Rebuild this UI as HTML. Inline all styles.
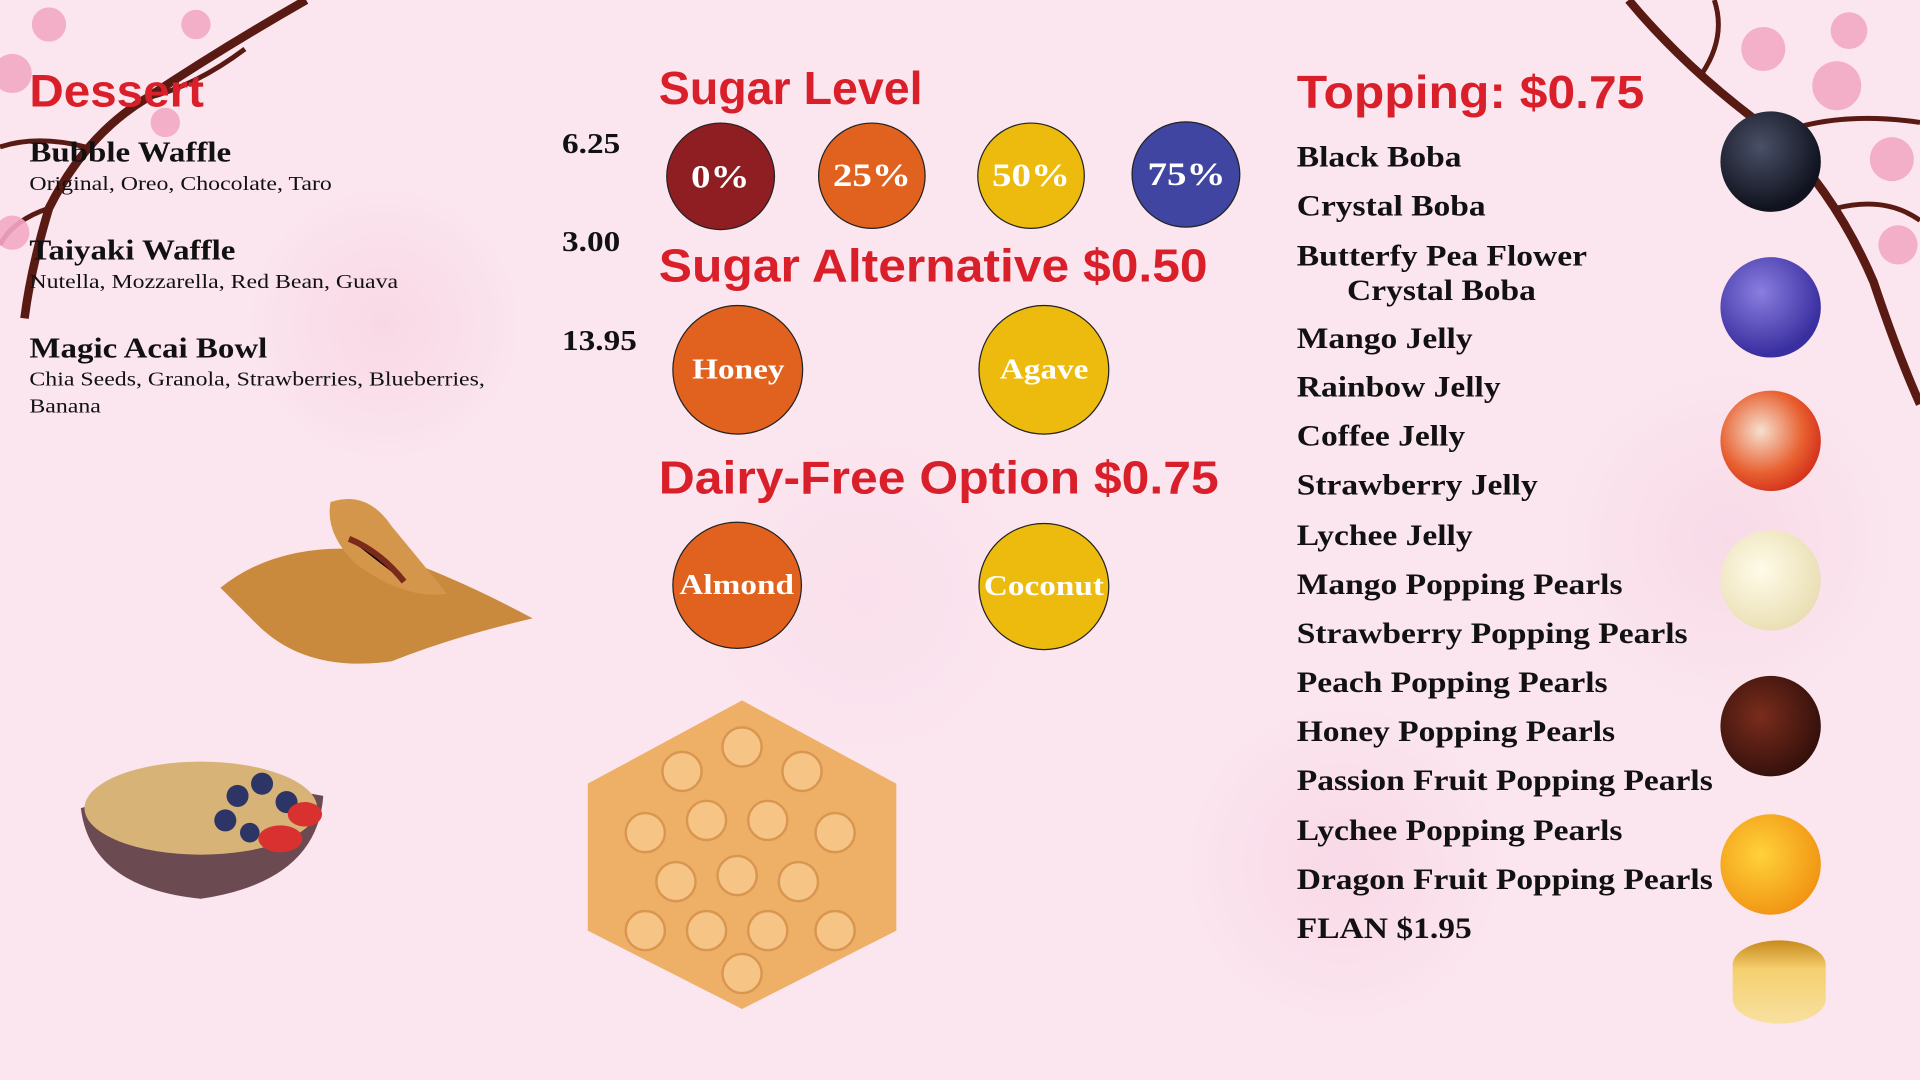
<!DOCTYPE html>
<html><head><meta charset="utf-8"><style>
html,body{margin:0;padding:0;width:1920px;height:1080px;overflow:hidden;background:#fbe6ef}
#w{position:absolute;left:0;top:0;width:1568px;height:882px;transform:scale(1.2245);transform-origin:0 0;
background:radial-gradient(circle at 20% 30%,#f9d8e6 0,transparent 120px),radial-gradient(circle at 70% 80%,#f9d9e7 0,transparent 140px),radial-gradient(circle at 45% 55%,#fae0ec 0,transparent 160px),radial-gradient(circle at 90% 50%,#f8dbe8 0,transparent 150px),#fbe6ef;
font-family:"Liberation Serif",serif;color:#111}
.a{position:absolute;white-space:nowrap;transform-origin:0 0}
.s{transform:scaleX(1.18)}
.h{font-family:"Liberation Sans",sans-serif;font-weight:bold;color:#d9202a;font-size:38px}
.it{font-weight:bold;font-size:23px}
.sub{font-size:16.5px}
.c{position:absolute;border-radius:50%;border:1.5px solid #222;box-sizing:border-box;display:flex;align-items:center;justify-content:center;color:#fff;font-weight:bold;font-size:27px}
.c span{display:inline-block;transform:scaleX(1.18)}
.t{font-weight:bold;font-size:24px;left:1059px;transform:scaleX(1.14)}
.ti{position:absolute;width:82px;height:82px;border-radius:50%}
</style></head><body><div id="w">
<svg class="a" style="left:0;top:0" width="260" height="320" viewBox="0 0 260 320">
<path d="M250 0 Q180 40 120 80 Q70 110 40 170 Q25 220 20 260" stroke="#5a1a14" stroke-width="7" fill="none"/>
<path d="M120 80 Q160 70 200 40 M70 120 Q30 110 0 120 M40 170 Q10 180 0 200" stroke="#5a1a14" stroke-width="4" fill="none"/>
<g fill="#f3a9c4" opacity=".9"><circle cx="40" cy="20" r="14"/><circle cx="10" cy="60" r="16"/><circle cx="135" cy="100" r="12"/><circle cx="10" cy="190" r="14"/><circle cx="160" cy="20" r="12"/></g></svg>
<svg class="a" style="left:1300px;top:0" width="268" height="340" viewBox="0 0 268 340">
<path d="M30 0 Q80 60 150 110 Q200 160 230 230 Q250 290 268 330" stroke="#5a1a14" stroke-width="7" fill="none"/>
<path d="M150 110 Q200 90 268 100 M200 170 Q240 160 268 180 M90 60 Q110 30 100 0" stroke="#5a1a14" stroke-width="4" fill="none"/>
<g fill="#f3a9c4" opacity=".9"><circle cx="140" cy="40" r="18"/><circle cx="200" cy="70" r="20"/><circle cx="245" cy="130" r="18"/><circle cx="250" cy="200" r="16"/><circle cx="210" cy="25" r="15"/></g></svg>

<div class="a h" style="left:24px;top:54px;font-size:37px;transform:scaleX(1.05)">Dessert</div>
<div class="a it" style="left:24px;top:112px;transform:scaleX(1.17)">Bubble Waffle</div>
<div class="a sub s" style="left:24px;top:140px">Original, Oreo, Chocolate, Taro</div>
<div class="a it" style="left:24px;top:192px;transform:scaleX(1.17)">Taiyaki Waffle</div>
<div class="a sub s" style="left:24px;top:220px">Nutella, Mozzarella, Red Bean, Guava</div>
<div class="a it" style="left:24px;top:272px;transform:scaleX(1.17)">Magic Acai Bowl</div>
<div class="a sub s" style="left:24px;top:299px;line-height:22px">Chia Seeds, Granola, Strawberries, Blueberries,<br>Banana</div>
<div class="a it s" style="left:459px;top:105px">6.25</div>
<div class="a it s" style="left:459px;top:185px">3.00</div>
<div class="a it s" style="left:459px;top:266px">13.95</div>

<div class="a h" style="left:538px;top:52px">Sugar Level</div>
<div class="c" style="left:544px;top:100px;width:89px;height:88px;background:#8f1e23"><span>0%</span></div>
<div class="c" style="left:668px;top:100px;width:88px;height:87px;background:#e0621e"><span>25%</span></div>
<div class="c" style="left:798px;top:100px;width:88px;height:87px;background:#ecbb0e"><span>50%</span></div>
<div class="c" style="left:924px;top:99px;width:89px;height:87px;background:#3f45a0"><span>75%</span></div>
<div class="a h" style="left:538px;top:197px;transform:scaleX(1.07)">Sugar Alternative $0.50</div>
<div class="c" style="left:549px;top:249px;width:107px;height:106px;background:#e0621e;font-size:23px"><span>Honey</span></div>
<div class="c" style="left:799px;top:249px;width:107px;height:106px;background:#ecbb0e;font-size:23px"><span>Agave</span></div>
<div class="a h" style="left:538px;top:370px;transform:scaleX(1.072)">Dairy-Free Option $0.75</div>
<div class="c" style="left:549px;top:426px;width:106px;height:104px;background:#e0621e;font-size:23px"><span>Almond</span></div>
<div class="c" style="left:799px;top:427px;width:107px;height:104px;background:#ecbb0e;font-size:23px"><span>Coconut</span></div>

<svg class="a" style="left:170px;top:400px" width="270" height="150"><path d="M10 80 Q60 40 140 50 Q200 70 265 105 Q200 120 150 140 Q80 150 40 110Z" fill="#c98a3e"/><path d="M100 10 Q130 0 150 30 Q175 60 195 85 Q160 90 120 60 Q95 35 100 10Z" fill="#d4964a"/><path d="M115 40 Q140 50 160 75" stroke="#7a2a1a" stroke-width="5"/></svg>
<svg class="a" style="left:64px;top:610px" width="205" height="128"><path d="M2 50 Q100 20 200 40 Q195 110 100 124 Q10 115 2 50Z" fill="#6b4a52"/><ellipse cx="100" cy="50" rx="95" ry="38" fill="#d7b377"/><g fill="#2c3566"><circle cx="130" cy="40" r="9"/><circle cx="150" cy="30" r="9"/><circle cx="120" cy="60" r="9"/><circle cx="170" cy="45" r="9"/><circle cx="140" cy="70" r="8"/></g><g fill="#d8312f"><ellipse cx="165" cy="75" rx="18" ry="11"/><ellipse cx="185" cy="55" rx="14" ry="10"/></g></svg>
<svg class="a" style="left:477px;top:570px" width="258" height="256"><polygon points="129,2 255,70 255,190 129,254 3,190 3,70" fill="#eeb067"/><g fill="#f6c484" stroke="#d99650" stroke-width="2"><circle cx="80" cy="60" r="16"/><circle cx="129" cy="40" r="16"/><circle cx="178" cy="60" r="16"/><circle cx="50" cy="110" r="16"/><circle cx="100" cy="100" r="16"/><circle cx="150" cy="100" r="16"/><circle cx="205" cy="110" r="16"/><circle cx="75" cy="150" r="16"/><circle cx="125" cy="145" r="16"/><circle cx="175" cy="150" r="16"/><circle cx="50" cy="190" r="16"/><circle cx="100" cy="190" r="16"/><circle cx="150" cy="190" r="16"/><circle cx="205" cy="190" r="16"/><circle cx="129" cy="225" r="16"/></g></svg>

<div class="a h" style="left:1059px;top:55px;transform:scaleX(1.07)">Topping: $0.75</div>
<div class="a t" style="top:116px">Black Boba</div>
<div class="a t" style="top:156px">Crystal Boba</div>
<div class="a t" style="top:196px;line-height:28px">Butterfy Pea Flower<br>&nbsp;&nbsp;&nbsp;&nbsp;&nbsp;&nbsp;Crystal Boba</div>
<div class="a t" style="top:264px">Mango Jelly</div>
<div class="a t" style="top:304px">Rainbow Jelly</div>
<div class="a t" style="top:344px">Coffee Jelly</div>
<div class="a t" style="top:384px">Strawberry Jelly</div>
<div class="a t" style="top:425px">Lychee Jelly</div>
<div class="a t" style="top:465px">Mango Popping Pearls</div>
<div class="a t" style="top:505px">Strawberry Popping Pearls</div>
<div class="a t" style="top:545px">Peach Popping Pearls</div>
<div class="a t" style="top:585px">Honey Popping Pearls</div>
<div class="a t" style="top:625px">Passion Fruit Popping Pearls</div>
<div class="a t" style="top:666px">Lychee Popping Pearls</div>
<div class="a t" style="top:706px">Dragon Fruit Popping Pearls</div>
<div class="a t" style="top:746px">FLAN $1.95</div>
<div class="ti" style="left:1405px;top:91px;background:radial-gradient(circle at 40% 35%,#4a5068,#10131e 70%)"></div>
<div class="ti" style="left:1405px;top:210px;background:radial-gradient(circle at 40% 35%,#8a7ee0,#3a2fa0 70%)"></div>
<div class="ti" style="left:1405px;top:319px;background:radial-gradient(circle at 40% 40%,#f6e0d0,#e86030 50%,#d02818 80%)"></div>
<div class="ti" style="left:1405px;top:433px;background:radial-gradient(circle at 40% 40%,#fffbe8,#e8dcb0 80%)"></div>
<div class="ti" style="left:1405px;top:552px;background:radial-gradient(circle at 40% 40%,#7a2c1c,#2e0e0a 80%)"></div>
<div class="ti" style="left:1405px;top:665px;background:radial-gradient(circle at 40% 40%,#ffd23a,#f09010 80%)"></div>
<div class="a" style="left:1415px;top:768px;width:76px;height:68px;border-radius:38px/20px;background:linear-gradient(#c88a1c,#f5d070 35%,#f8e0a0)"></div>
</div></body></html>
